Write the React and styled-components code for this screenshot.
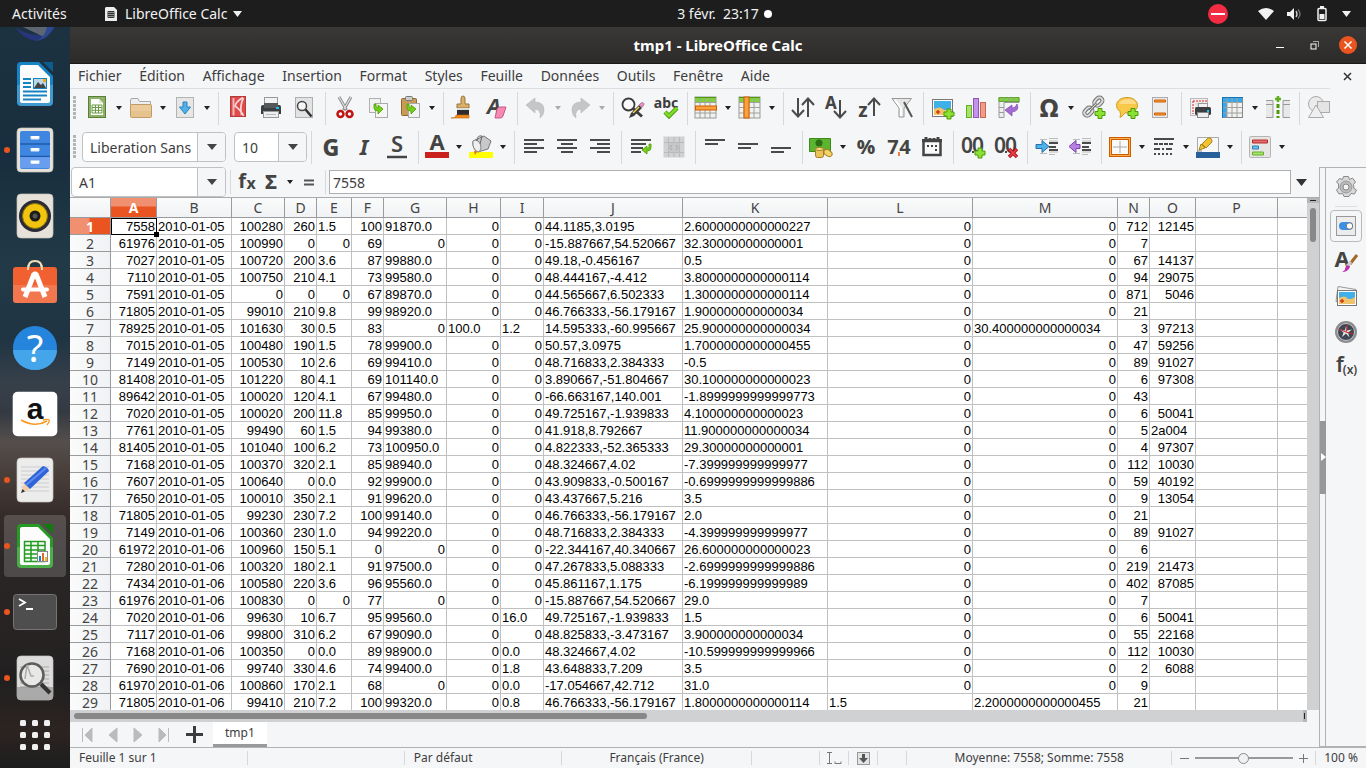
import React from "react";
import styled, { createGlobalStyle, css } from "styled-components";

const UI = `"Noto Sans", "Open Sans", sans-serif`;

const GlobalStyle = createGlobalStyle`
  * { box-sizing: border-box; }
  html, body { margin: 0; padding: 0; }
  body { font-family: ${UI}; font-size: 14px; color: #3d3d3d; background: #f5f6f7; overflow: hidden; }
  button, input, select { font: inherit; color: inherit; margin: 0; padding: 0; border: 0; background: none; }
  svg { display: block; overflow: visible; }
`;

/* ---------- drawings ---------- */

const Svg = ({ w = 24, h = 24, children }) => (
  <svg width={w} height={h} viewBox={`0 0 ${w} ${h}`} fill="none" aria-hidden="true">{children}</svg>
);
const T = ({ x = 12, y = 20, s = 20, w = 700, f = "#444", children, ...rest }) => (
  <text x={x} y={y} fontSize={s} fontWeight={w} fill={f} textAnchor="middle" fontFamily={UI} {...rest}>{children}</text>
);
const Plus = ({ x, y }) => (
  <path transform={`translate(${x} ${y})`} d="M-2 -5h4v3h3v4h-3v3h-4v-3h-3v-4h3z" fill="#8ae234" stroke="#4e9a06" />
);
const Lines = ({ rows, c = "#4a4a4a" }) => rows.map(([x1, x2, y]) => (
  <path key={y} d={`M${x1} ${y}H${x2}`} stroke={c} strokeWidth="2" />
));
const GreenArrow = ({ x, y }) => (
  <path transform={`translate(${x} ${y})`} d="M0 0v4q0 3 4 3v3l5-5-5-4v3q-2 0-2-2V0z" fill="#73d216" stroke="#4e9a06" strokeWidth=".8" />
);
const Grid = () => (
  <path d="M6 1v21M11 1v21M16 1v21M1 6.500h21M1 11.500h21M1 17h21" stroke="#a0a29e" />
);

const icons = {
  newDoc: <Svg><rect x="3.500" y=".5" width="17" height="21" fill="#8fb069" stroke="#587f38" /><path d="M6 3h8l4 4v12H6z" fill="#fff" /><path d="M14 3v4h4" fill="#dfead2" /><path d="M7 9h10v8H7zM7 11.500h10M7 14.300h10M10.500 9v8M13.500 9v8" stroke="#6b9a45" /></Svg>,
  open: <Svg><path d="M1.500 4q0-1.500 1.500-1.500h6l1.500 3h11v8h-20z" fill="#eee" stroke="#aaa" /><rect x="1.500" y="8.500" width="21" height="13" rx="1" fill="#eccb9a" stroke="#c19a66" /><path d="M2 15h20v6H2z" fill="#e3bd86" opacity=".6" /></Svg>,
  save: <Svg><rect x="3.500" y="1.500" width="17" height="20" fill="#e6e6e6" stroke="#b4b4b4" /><path d="M10 6h4v5h3.500L12 18l-5.500-7H10z" fill="#4fb0ea" stroke="#2a83bd" /></Svg>,
  pdf: <Svg><rect x="4.500" y=".5" width="15" height="20" fill="#df4a4a" stroke="#b53a3a" /><path d="M7.500 2v17.500" stroke="#f4b9b9" strokeWidth="2" /><path d="M17 1.500q-7 4-8 8.500 6 4 8.500 10M17.500 2q-4 7-2 17" stroke="#f9d6d6" strokeWidth="1.700" /></Svg>,
  print: <Svg><rect x="5.500" y="1.500" width="13" height="9" fill="#f2f2f2" stroke="#999" /><path d="M2 11q0-2 2-2h16q2 0 2 2v7H2z" fill="#3c3f41" /><path d="M5 7h14v5H5z" fill="#55585a" /><rect x="17" y="11" width="3" height="2" fill="#19c3f0" /><rect x="4.500" y="15.500" width="15" height="6" fill="#eee" stroke="#999" /><path d="M7 18.500h10" stroke="#bbb" /></Svg>,
  preview: <Svg><rect x="3.500" y="1.500" width="17" height="20" fill="#e3e3e3" stroke="#b0b0b0" /><circle cx="10" cy="10" r="4.500" fill="#f6f6f6" stroke="#444" strokeWidth="1.500" /><path d="M13.500 13.500l6 7" stroke="#333" strokeWidth="2.500" /></Svg>,
  cut: <Svg><path d="M6 1l7.500 13M18 1l-7.500 13" stroke="#888" strokeWidth="3" /><path d="M6 1l7 12M18 1l-7 12" stroke="#ddd" strokeWidth="1.300" /><circle cx="7.500" cy="18" r="3" stroke="#c01414" strokeWidth="2.500" /><circle cx="16.500" cy="18" r="3" stroke="#c01414" strokeWidth="2.500" /></Svg>,
  copy: <Svg><rect x="3.500" y="2.500" width="11" height="14" fill="#f2f2f2" stroke="#b0b0b0" /><rect x="9.500" y="7.500" width="12" height="14" fill="#f6f6f6" stroke="#aaa" /><GreenArrow x="8" y="8" /></Svg>,
  paste: <Svg><rect x="3.500" y="2.500" width="15" height="17" rx="1" fill="#c79a58" stroke="#91672c" /><rect x="7.500" y=".5" width="7" height="4" rx="1" fill="#ccc" stroke="#777" /><rect x="10.500" y="7.500" width="11" height="14" fill="#f2f2f2" stroke="#aaa" /><GreenArrow x="9" y="8" /></Svg>,
  brush: <Svg><path d="M10 8V3q0-3 2-3t2 3v5h4v4H6V8z" fill="#d9b06a" stroke="#9c7534" /><path d="M6 12h12v2H6z" fill="#ddd" /><path d="M6 14h12v5H6z" fill="#2d2d2d" /><path d="M5 19h13v3H0q5 0 5-3z" fill="#f08a1c" stroke="#c86a08" strokeWidth=".6" /></Svg>,
  clear: <Svg><T x={10} y={18} s={22} fontStyle="italic">A</T><path d="M13 13q1-2 3-2h6l-3 9q-.6 2-3 2h-5z" fill="#f58bb4" stroke="#c9588a" /></Svg>,
  undo: <Svg><path d="M2 9l9-7v4q9 0 9 8 0 5-4 8 1-4-.500-6.500Q14 13 11 13v4z" fill="#c4c6c8" stroke="#b5b7b9" strokeWidth=".6" /></Svg>,
  redo: <Svg><path d="M22 9l-9-7v4q-9 0-9 8 0 5 4 8-1-4 .5-6.500Q10 13 13 13v4z" fill="#c4c6c8" stroke="#b5b7b9" strokeWidth=".6" /></Svg>,
  find: <Svg><circle cx="7.500" cy="8.500" r="6" stroke="#3c3c3c" strokeWidth="1.800" fill="#fafafa" /><path d="M12 12.500l9 8" stroke="#3c3c3c" strokeWidth="3" /><path d="M8 22l2-5 8-8 3 3-8 8z" fill="#3c3c3c" /><path d="M12 17l6-6" stroke="#f3d34a" strokeWidth="1.500" /><path d="M18 9l2-2q1.500-1 2.500 0t0 2.500L21 11.500z" fill="#e58fc4" stroke="#8a5a7c" strokeWidth=".6" /></Svg>,
  spell: <Svg><T x={12} y={12} s={14} f="#3c3c3c">abc</T><path d="M11 16l4 4 8-8" stroke="#4e9a06" strokeWidth="4.500" /><path d="M11 16l4 4 8-8" stroke="#7ddc2a" strokeWidth="2.600" /></Svg>,
  rows: <Svg><rect x="1" y="1" width="21" height="21" fill="#f1f1f0" /><path d="M1 1h21v5H1z" fill="#7fd23c" /><Grid /><rect x="1" y="1" width="21" height="21" stroke="#999" /><path d="M1 1.500h21" stroke="#4e9a06" /><rect x="1.500" y="10" width="21" height="4" fill="#f9a03f" stroke="#ce5c00" /></Svg>,
  cols: <Svg><rect x="1" y="1" width="21" height="21" fill="#f1f1f0" /><path d="M1 1h21v5H1z" fill="#7fd23c" /><Grid /><rect x="1" y="1" width="21" height="21" stroke="#999" /><path d="M1 1.500h21" stroke="#4e9a06" /><rect x="6" y="1" width="5" height="21" fill="#f9a03f" stroke="#ce5c00" /></Svg>,
  sort: <Svg><path d="M7 2v18M1 14l6 6.500 6-6.500M17 21V3M11 9l6-6.500L23 9" stroke="#4a4a4a" strokeWidth="2" /></Svg>,
  sortAz: <Svg><T x={7} y={13} s={17}>A</T><path d="M16 4v17M10 15l6 6.500 6-6.500" stroke="#4a4a4a" strokeWidth="2" /></Svg>,
  sortZa: <Svg><T x={6} y={21} s={19}>z</T><path d="M17 20V3M11 9l6-6.500L23 9" stroke="#4a4a4a" strokeWidth="2" /></Svg>,
  filter: <Svg><path d="M2 2.500h19.500L14 12v9h-5v-9z" fill="#e6e6e6" stroke="#999" /><path d="M5 4l6 8v8" stroke="#fff" strokeWidth="2" /><path d="M14 6l8 15" stroke="#555" strokeWidth="2" /></Svg>,
  image: <Svg><rect x="1.500" y="3.500" width="20" height="17" fill="#fff" stroke="#777" /><path d="M3 5h17v9H3z" fill="#3fb0e8" /><path d="M3 13q6-3 9 0t8-1v7H3z" fill="#f1c26c" /><path d="M7 14v4M5 16h4" stroke="#d33a12" strokeWidth="1.500" /><Plus x={18} y={18} /></Svg>,
  chart: <Svg><rect x="2.500" y="9.500" width="5" height="12" fill="#a5e36a" stroke="#67ae2a" /><rect x="9.500" y="2.500" width="5" height="19" fill="#c792ea" stroke="#8f55bd" /><rect x="16.500" y="6.500" width="5" height="15" fill="#f19c88" stroke="#c96852" /></Svg>,
  pivot: <Svg><path d="M2 1.500h20v5H7v15H2z" fill="#eee" stroke="#999" /><path d="M2 1.500h20v4H2z" fill="#7fd23c" stroke="#5fa32a" /><path d="M7 1v5M12 1v5M17 1v5M2 11.500h5M2 16.500h5" stroke="#999" /><path d="M20 8q3 7-5 8v4l-7-6 7-5v3q4 0 5-4z" fill="#a66bd3" stroke="#7d44ac" strokeWidth=".7" /></Svg>,
  omega: <Svg><T y={21} s={25} w={800}>Ω</T></Svg>,
  link: <Svg><g stroke="#777" strokeWidth="4"><rect x="-3" y="-5" width="6" height="9" rx="3" transform="translate(16 6) rotate(45)" /><rect x="-3" y="-5" width="6" height="9" rx="3" transform="translate(6 16) rotate(45)" /></g><g stroke="#ddd" strokeWidth="1.800"><rect x="-3" y="-5" width="6" height="9" rx="3" transform="translate(16 6) rotate(45)" /><rect x="-3" y="-5" width="6" height="9" rx="3" transform="translate(6 16) rotate(45)" /></g><path d="M8 14l6-6" stroke="#777" strokeWidth="3" /><path d="M8 14l6-6" stroke="#ddd" /><Plus x={18} y={17.500} /></Svg>,
  comment: <Svg><path d="M12 1.500c6 0 10.500 3.400 10.500 8S18 17 12 17l-2-.2Q8 20 5 21.500q1-3 0-6Q1.500 13 1.500 9.500c0-4.600 4.500-8 10.500-8z" fill="#fbc94a" stroke="#d19a1c" /><path d="M4 8q2-5 9-5t8 5z" fill="#fff" opacity=".35" /><Plus x={18} y={17.500} /></Svg>,
  header: <Svg><rect x="4.500" y="1.500" width="15" height="20" fill="#ececec" stroke="#aaa" /><path d="M6.500 4h11v2h-11zM6.500 17h11v2h-11z" fill="#f9a03f" stroke="#ce5c00" /></Svg>,
  printArea: <Svg><rect x="1.500" y="2.500" width="17" height="17" fill="#f0f0f0" stroke="#bbb" /><path d="M4 5h14M4 5v13" stroke="#e02020" strokeDasharray="2 1" /><path d="M6 8h11M6 12h11M9 6v12M13 6v12" stroke="#ccc" /><rect x="9.500" y="7.500" width="9" height="5" fill="#f2f2f2" stroke="#999" /><rect x="6" y="11" width="16" height="8" rx="1.500" fill="#3c3f41" /><rect x="18" y="14" width="2" height="2" fill="#19c3f0" /><rect x="8.500" y="16.500" width="11" height="5" fill="#eee" stroke="#888" /></Svg>,
  freeze: <Svg><rect x="1" y="1" width="21" height="21" fill="#f1f1f0" /><path d="M1 1h21v5H6v16H1z" fill="#35a7ea" /><Grid /><rect x="1.500" y="1.500" width="20" height="20" stroke="#888" /><path d="M1.500 22V1.500H22" stroke="#1673b8" /></Svg>,
  split: <Svg w={26}><path d="M1 4.500h7v17H1M25 4.500h-7v17h7M1 8.500h7M18 8.500h7" fill="#e8e8e8" stroke="#999" /><path d="M13 8v14" stroke="#4e9a06" strokeWidth="3" strokeDasharray="4 2" /><path d="M13 0v6M10 3h6" stroke="#5fae1d" strokeWidth="2.500" /></Svg>,
  shapes: <Svg><circle cx="9" cy="8" r="7.500" fill="#ebebeb" stroke="#aaa" /><rect x="10.500" y="5.500" width="12" height="11" fill="#e4e4e4" stroke="#aaa" /><path d="M9 9l7.500 12.500h-15z" fill="#efefef" stroke="#aaa" /></Svg>,
  bold: <Svg><T y={21} s={23} w={800}>G</T></Svg>,
  italic: <Svg><T y={20} s={22} w={700} fontStyle="italic">I</T></Svg>,
  under: <Svg><T y={17} s={22} w={600}>S</T><path d="M2 22h20" stroke="#444" strokeWidth="2.500" /></Svg>,
  fontColor: <Svg><T y={15} s={22}>A</T><path d="M0 20h24" stroke="#c9211e" strokeWidth="6" /></Svg>,
  highlight: <Svg><path d="M0 20h24" stroke="#ff0" strokeWidth="6" /><path d="M4 6l11-5 7 5-3 8-10 3q-6-3-5-11z" fill="#c8c8c8" stroke="#777" /><path d="M4 6q2-2 5 0t3 7q-1 4-3 4-6-3-5-11z" fill="#efefef" stroke="#888" /><path d="M5 16q2-1 3 1l-2 3z" fill="#f06a10" /><path d="M8 6q0-6 5-5l-2 8" stroke="#666" /></Svg>,
  alignL: <Svg><Lines rows={[[2, 22, 5], [2, 15, 9], [2, 22, 13], [2, 15, 17]]} /></Svg>,
  alignC: <Svg><Lines rows={[[2, 22, 5], [6, 18, 9], [2, 22, 13], [6, 18, 17]]} /></Svg>,
  alignR: <Svg><Lines rows={[[2, 22, 5], [9, 22, 9], [2, 22, 13], [9, 22, 17]]} /></Svg>,
  wrap: <Svg><Lines rows={[[2, 22, 5], [2, 17, 9], [2, 14, 13], [2, 12, 17]]} /><path d="M22 9v4q0 3-4 3v3l-5-4 5-4v3q2 0 2-2V9z" fill="#73d216" stroke="#4e9a06" strokeWidth=".8" /></Svg>,
  merge: <Svg><rect x="1.500" y="1.500" width="21" height="21" fill="#d0d1d2" /><path d="M2 7.500h20M2 17.500h20M6.500 2v20M12 2v5M17.500 2v20M12 18v4" stroke="#b8babb" /><path d="M7 8h10v9H7z" fill="#c6c7c8" /><path d="M10 10l-2 2.500 2 2.500M14 10l2 2.500-2 2.500" stroke="#a8a8a8" /></Svg>,
  top: <Svg><Lines rows={[[2, 22, 5], [2, 15, 9]]} /></Svg>,
  middle: <Svg><Lines rows={[[2, 22, 9], [2, 15, 13]]} /></Svg>,
  bottom: <Svg><Lines rows={[[2, 22, 13], [2, 15, 17]]} /></Svg>,
  money: <Svg><path d="M.5 3.500h21v13H.500z" fill="#5cb531" stroke="#3d8a1a" /><circle cx="10" cy="8" r="3.500" fill="#2d6e12" /><rect x="6.500" y="13.500" width="8" height="9" rx="2" fill="#e9c35a" stroke="#a67c1c" /><ellipse cx="10.500" cy="14" rx="4" ry="1.500" fill="#f7e08e" stroke="#a67c1c" /><ellipse cx="19" cy="18" rx="4.500" ry="3" transform="rotate(35 19 18)" fill="#f2d36b" stroke="#a67c1c" /></Svg>,
  percent: <Svg><T y={19} s={20} w={800}>%</T></Svg>,
  number: <Svg><T x={6} y={19} s={20}>7</T><T x={18} y={19} s={20}>4</T><path d="M12 17v4" stroke="#f0803c" strokeWidth="2" /></Svg>,
  date: <Svg><rect x="3.500" y="6" width="17" height="14" fill="#fafafa" stroke="#444" strokeWidth="2.500" /><path d="M2 5.500h20M6 2v4M10 3v3M14 3v3M18 2v4" stroke="#444" strokeWidth="3" /><path d="M7 11h11M15 15h3" stroke="#444" strokeWidth="2" strokeDasharray="2 2" /></Svg>,
  addDec: <Svg><T x={6} y={18} s={21} w={600}>0</T><T x={17} y={18} s={21} w={600}>0</T><path d="M11 17h2" stroke="#444" strokeWidth="2" /><Plus x={19} y={18} /></Svg>,
  delDec: <Svg><T x={6} y={18} s={21} w={600}>0</T><T x={17} y={18} s={21} w={600}>0</T><path d="M11 17h2" stroke="#444" strokeWidth="2" /><path d="M15 14l8 8M23 14l-8 8" stroke="#b3141c" strokeWidth="3.500" /><path d="M15.500 14.500l7 7M22.500 14.500l-7 7" stroke="#e8454c" strokeWidth="1.500" /></Svg>,
  indent: <Svg><path d="M5 4.500h7M5 18.500h7M14 3.500h9M14 19.500h6M14 6h9M14 17h9" stroke="#bbb" /><Lines rows={[[14, 23, 8], [14, 21, 12], [14, 23, 15]]} /><path d="M1 9.500h6v-4l7 6-7 6v-4H1z" fill="#4fb0ea" stroke="#2272ab" /></Svg>,
  outdent: <Svg><path d="M5 4.500h7M5 18.500h7M14 3.500h9M14 19.500h6M14 6h9M14 17h9" stroke="#bbb" /><Lines rows={[[14, 23, 8], [14, 21, 12], [14, 23, 15]]} /><path d="M12 9.500H8v-4l-7 6 7 6v-4h4z" fill="#b681e0" stroke="#7d44ac" /></Svg>,
  borders: <Svg><rect x="2.500" y="3.500" width="19" height="17" fill="#fafafa" stroke="#ce5c00" strokeWidth="3" /><rect x="2.500" y="3.500" width="19" height="17" stroke="#fcae4e" /><path d="M12 6v12M5 12h14" stroke="#aaa" /></Svg>,
  lineStyle: <Svg><path d="M2 4h20" stroke="#4a4a4a" strokeWidth="2" /><path d="M2 9h20" stroke="#4a4a4a" strokeWidth="2" strokeDasharray="4 1" /><path d="M2 14h20" stroke="#4a4a4a" strokeWidth="2" strokeDasharray="6 2 2 2" /><path d="M2 19h20" stroke="#4a4a4a" strokeWidth="2" strokeDasharray="2 2" /></Svg>,
  borderColor: <Svg><path d="M1.500 18V2.500h21V18" fill="#f8f8f8" stroke="#aaa" /><path d="M0 20h24" stroke="#2a6099" strokeWidth="6" /><path d="M3 15l2-6 4 4zM6 9l6-6q4-1 4 4l-6 6z" fill="#f1c232" stroke="#a8861a" /><path d="M1 16h5" stroke="#888" /></Svg>,
  cond: <Svg><rect x="1.500" y="1.500" width="21" height="21" rx="1" fill="#e6e5e3" stroke="#b5b5b5" /><path d="M4.500 5h15v3h-15z" fill="#e56a6a" stroke="#b52b2b" /><path d="M4.500 11h6v3h-6z" fill="#6fc1f0" stroke="#2a7fb5" /><path d="M4.500 17h11v3h-11z" fill="#a5e36a" stroke="#67ae2a" /></Svg>,
  fx: <Svg><T x={7} y={18} s={20}>f</T><T x={16} y={19} s={16}>x</T></Svg>,
  sigma: <Svg><T y={19} s={20} w={800}>Σ</T></Svg>,
  equals: <Svg><path d="M7 10.500h10M7 14.500h10" stroke="#555" strokeWidth="2" /></Svg>,
  gear: <Svg><path d="M9.500 1.500h5l1 3 3-1.500 3 4-2 2.500.5 4 2.500 1.500-2 4-3.500-.5-2 3h-5l-1.500-3-3.500.5-2.500-4 2-2v-4l-2-2 3-3.500 3 1z" fill="#d9d9d9" stroke="#8a8a8a" /><circle cx="12" cy="12" r="6" fill="#bbb" stroke="#999" /><circle cx="12" cy="12" r="3" fill="#f2f2f2" stroke="#888" /></Svg>,
  props: <Svg><rect x="2.500" y="2.500" width="19" height="19" fill="#ececec" stroke="#999" /><rect x="5" y="8" width="14" height="8" rx="4" fill="#3d8fe6" /><circle cx="15.500" cy="12" r="3.200" fill="#fff" stroke="#777" /></Svg>,
  styles: <Svg w={26}><T x={9} y={17} s={22}>A</T><path d="M24 5l-7 9" stroke="#a5682a" strokeWidth="3" /><path d="M18 12l-4 4" stroke="#ccc" strokeWidth="3" /><path d="M15 15l2 2q-2 5-8 5 4-2 3-4z" fill="#c22ab0" /></Svg>,
  gallery: <Svg><path d="M4 1.500l18 3-2 14-18-2z" fill="#f4f4f4" stroke="#999" /><rect x="3.500" y="5.500" width="19" height="15" fill="#fff" stroke="#777" /><path d="M5 7h16v7H5z" fill="#3fb0e8" /><path d="M5 13q6-3 8 0t8-1v7H5z" fill="#f1c26c" /><path d="M8 14v4M6 16h4" stroke="#d33a12" strokeWidth="1.500" /></Svg>,
  compass: <Svg><circle cx="12" cy="12" r="10" fill="#3e4654" stroke="#8d8d8d" strokeWidth="2" /><circle cx="12" cy="12" r="8.500" stroke="#ccc" /><path d="M12 6l1 4.500 5-1-4 3 1.500 5-3.500-4-4 3.500 1.500-4.500L6 9.500l5 1z" fill="#e8e8e8" /><path d="M5 9l7 3 2-7.500M12 12l7 2" stroke="#d22828" strokeWidth="1" /></Svg>,
  func: <Svg><T x={6} y={17} s={21} w={600}>f</T><T x={16} y={19} s={12} w={600}>(x)</T></Svg>,
};

const Tri = ({ s = 6, c = "#222" }) => (
  <svg width={s} height={Math.ceil(s / 2) + 1} viewBox="0 0 6 4" preserveAspectRatio="none" aria-hidden="true"><path d="M0 0h6L3 4z" fill={c} /></svg>
);

/* ---------- desktop ---------- */

const Desktop = styled.div`
  display: flex; flex-direction: column; height: 100vh; overflow: hidden;
`;
const TopBar = styled.header`
  display: grid; grid-template-columns: 70px 1fr auto 1fr; align-items: center;
  height: 27px; background: #1d1d1d; color: #f2f2f2; white-space: nowrap;
`;
const TopButton = styled.button`
  display: flex; align-items: center; gap: 8px; padding-left: ${(p) => p.$pad || 0}px; line-height: 20px;
`;
const AppName = styled.span`display: flex; align-items: center; gap: 6px;`;
const Clock = styled.button`display: flex; align-items: center; gap: 5px; padding-left: 13px; white-space: pre;`;
const Dot = styled.span`width: 8px; height: 8px; border-radius: 50%; background: #fff;`;
const Tray = styled.div`display: flex; justify-content: flex-end; align-items: center; gap: 12px; padding-right: 15px;`;
const Busy = styled.span`
  display: flex; align-items: center; justify-content: center; width: 20px; height: 20px; margin-right: 18px;
  border-radius: 50%; background: #f22c42;
  &::after { content: ""; width: 14px; height: 2px; background: #fff; }
`;

const Work = styled.div`display: flex; flex: 1; min-height: 0;`;
const Dock = styled.nav`
  flex: none; width: 70px; overflow: hidden;
  background: linear-gradient(#1c3241 0, #182e3e 18%, #223a48 32%, #1f3442 42%, #37404a 48%, #343a42 52%, #554e4c 56%, #463c38 61%, #352c2a 66%, #2a2626 72%, #272322 82%, #201f20 88%, #2c2421 95%, #1d1d1e 100%);
`;
const DockItem = styled.button`
  position: relative; display: flex; align-items: ${(p) => (p.$partial ? "flex-start" : "center")}; justify-content: center;
  width: 70px; height: ${(p) => p.$h || 66}px;
  ${(p) => p.$active && css`
    &::before { content: ""; position: absolute; inset: 2px 4px; border-radius: 4px; background: rgba(255,255,255,.17); }
  `}
  ${(p) => p.$running && css`
    &::after { content: ""; position: absolute; left: 4px; top: 30px; width: 6px; height: 6px; border-radius: 50%; background: #e95420; }
  `}
  svg { position: relative; }
`;

const Doc = ({ c, d, children }) => (
  <Svg w={46} h={46}>
    <path d="M9 1h18l14 14v26q0 4-4 4H9q-4 0-4-4V5q0-4 4-4z" fill={c} />
    <path d="M5 24h36v17q0 4-4 4H9q-4 0-4-4z" fill="#fff" opacity=".18" />
    <path d="M31 1h10v10z" fill={d} />
    <path d="M9 4h17l12 12v24q0 2-2 2H10q-2 0-2-2V6q0-2 2-2z" fill="#fcfcfc" />
    {children}
  </Svg>
);
const Plate = ({ f = "#e6e2da", children }) => (
  <Svg w={46} h={46}><rect x="5" y="1" width="36" height="44" rx="4" fill={f} stroke="#c9c5bd" strokeWidth=".7" />{children}</Svg>
);

const dockIcons = {
  mail: <Svg w={46} h={16}><path d="M3 0q8 12 21 14 13-2 19-14h-6q-4 7-12 8Q13 7 3 0z" fill="#27367a" /><path d="M11 0h25l-4 10z" fill="#5d6670" /><path d="M24 14q9-4 11-14h7q-6 12-18 14z" fill="#2d4a91" /></Svg>,
  writer: <Doc c="#1683c4" d="#0c5c92"><path d="M11 18h8M11 22h8M11 26h8M11 30.500h24M11 34.500h24M11 38.500h18" stroke="#1683c4" strokeWidth="2" /><rect x="21.500" y="17.500" width="13" height="10" fill="#bcd8e8" stroke="#1683c4" /><path d="M22 27l4-6 3 3 2-2 3 5z" fill="#444" /><rect x="31" y="18" width="3" height="3" fill="#f2a91c" /></Doc>,
  files: <Plate><rect x="8" y="4" width="30" height="38" rx="2" fill="#3f86e0" /><path d="M8 17h30M8 29.500h30" stroke="#1d5cad" strokeWidth="1.500" /><path d="M8 30h30v11H8z" fill="#7aa6f5" opacity=".7" /><path d="M19 9v3h8V9M19 21v3h8v-3M19 33.500v3h8v-3" fill="#fff" stroke="#dfe9f7" /></Plate>,
  music: <Plate><circle cx="23" cy="23" r="16" fill="#2b2a35" /><circle cx="23" cy="23" r="12.500" fill="#f2c40f" stroke="#8a7408" /><circle cx="23" cy="23" r="5.500" fill="#1c1c1c" /><circle cx="23" cy="23" r="2.500" fill="#555" /></Plate>,
  software: <Svg w={46} h={46}><path d="M16 10q0-8 7-8t7 8" stroke="#f3dfb4" strokeWidth="2" /><rect x="1" y="8" width="44" height="36" rx="3" fill="#f06030" /><path d="M1 26h44v15q0 3-3 3H4q-3 0-3-3z" fill="#fff" opacity=".15" /><path d="M13 38l9-23h2l9 23" stroke="#fff" strokeWidth="5" strokeLinejoin="bevel" /><path d="M11 30.500h24" stroke="#fff" strokeWidth="4" strokeLinecap="round" /><path d="M16 11q0-3 1-5M30 11q0-3-1-5" stroke="#f3dfb4" strokeWidth="2" /></Svg>,
  help: <Svg w={46} h={46}><circle cx="23" cy="23" r="22" fill="#2585dc" /><path d="M1 25a22 20 0 0 0 44 0z" fill="#45a5ea" /><T x={23} y={37} s={38} w={400} f="#fff">?</T></Svg>,
  amazon: <Svg w={46} h={46}><rect x=".7" y=".7" width="44.600" height="44.600" rx="5" fill="#fff" /><T x={23} y={28} s={30} f="#111" fontFamily="Liberation Sans">a</T><path d="M9 29q14 8 26 1" stroke="#f7981d" strokeWidth="1.500" /><path d="M31 29q5-1 6 0t-2 5" stroke="#f7981d" strokeWidth="1.300" /></Svg>,
  gedit: <Plate f="#ececec"><path d="M9 10h28M9 14h28M9 18h28M9 22h28M9 26h28M9 30h28M9 34h28" stroke="#ccc" /><path d="M9 36l3-10 6 6z" fill="#f0cfa6" /><path d="M9 36l1.500-4 2.500 2.500z" fill="#333" /><path d="M12 26l19-17q5 1 6 5L18 32z" fill="#2f63d8" /><path d="M14 28l20-17" stroke="#5e8bf0" strokeWidth="2" /></Plate>,
  calc: <Doc c="#259b24" d="#12780f"><path d="M12 18h21v20H12z" fill="#f3fbf1" /><path d="M12 18.500h21M12 22.500h21M12 27h21M12 31h21M12 35h21M12 38.500h21M12.500 18v21M19 18v21M26 18v21M33 18v21" stroke="#259b24" strokeWidth="1.500" /><rect x="25.500" y="28.500" width="10" height="10" fill="#fff" stroke="#888" /><path d="M27 33h2v5h-2z" fill="#1683c4" /><path d="M30 30h2v8h-2z" fill="#e56a20" /><path d="M33 34h2v4h-2z" fill="#f2b61c" /></Doc>,
  terminal: <Svg w={46} h={38}><rect x="1.500" y="1.500" width="43" height="35" rx="3" fill="#4e4e4e" stroke="#747474" /><path d="M7 6l6 3.500L7 13M14 16h7" stroke="#fff" strokeWidth="1.800" /></Svg>,
  viewer: <Plate f="#dcdcdc"><path d="M8 12h29M8 16h29M8 20h29M8 24h29M8 28h29M8 32h29" stroke="#aaa" /><path d="M5 32h36v9q0 4-4 4H9q-4 0-4-4z" fill="#888" opacity=".6" /><path d="M29 29l9 9" stroke="#333" strokeWidth="4" /><circle cx="20" cy="20" r="11.500" fill="#e8e8e6" stroke="#5c5c5c" strokeWidth="2.500" /><path d="M13 24l2-14 4 11h3" stroke="#aaa" strokeWidth="1.500" /></Plate>,
  apps: <Svg w={32} h={32}>{[1, 13, 25].map((y) => [1, 13, 25].map((x) => <rect key={`${x}-${y}`} x={x} y={y} width="6" height="6" rx="1.500" fill="#f0f0f0" />))}</Svg>,
};

const dock = [
  ["mail", "Thunderbird", { $h: 24, $partial: true }],
  ["writer", "LibreOffice Writer", {}],
  ["files", "Fichiers", { $running: true }],
  ["music", "Rhythmbox", {}],
  ["software", "Logiciels", {}],
  ["help", "Aide", {}],
  ["amazon", "Amazon", {}],
  ["gedit", "Éditeur de texte", { $running: true }],
  ["calc", "LibreOffice Calc", { $running: true, $active: true }],
  ["terminal", "Terminal", { $running: true }],
  ["viewer", "Visionneur de documents", { $running: true }],
  ["apps", "Applications", { $h: 48 }],
];

/* ---------- window ---------- */

const Window = styled.main`display: flex; flex-direction: column; flex: 1; min-width: 0; background: #f5f6f7;`;
const TitleBar = styled.div`
  display: grid; grid-template-columns: 1fr auto 1fr; align-items: center; height: 37px;
  background: linear-gradient(#393836, #2c2b29); border-bottom: 1px solid #1b1a19; color: #fff;
`;
const Title = styled.h1`grid-column: 2; margin: 0; font-size: 15px; font-weight: 700; line-height: 20px;`;
const WindowButtons = styled.div`display: flex; align-items: center; justify-content: flex-end; gap: 16px; padding-right: 9px;`;
const WindowButton = styled.button`
  display: flex; align-items: center; justify-content: center; width: 18px; height: 18px; border-radius: 50%;
  background: ${(p) => (p.$close ? "#e95420" : "none")};
`;
const MenuBar = styled.nav`display: flex; align-items: center; justify-content: space-between; height: 24px;`;
const MenuList = styled.div`display: flex; flex: 0 1 708px; justify-content: space-between; white-space: nowrap;`;
const MenuItem = styled.button`height: 24px; padding: 0 8px; line-height: 24px;`;
const CloseDoc = styled.button`padding: 4px 14px;`;
const ToolArea = styled.div`display: flex; flex-direction: column;`;
const TopRule = styled.div`height: 1px; margin-right: 36px; background: #dcdee0;`;
const Toolbar = styled.div`display: flex; align-items: center; height: 39px; padding: 0 0 1px 3px;`;
const Handle = styled.span`
  width: 3px; height: 24px; margin-right: 6px;
  background: repeating-linear-gradient(#b4b4b4 0 3px, transparent 3px 4px);
`;
const Sep = styled.span`flex: none; width: 1px; height: ${(p) => p.$h || 33}px; margin: 0 3px 0 4px; background: #d6d8da;`;
const ToolButton = styled.button`
  flex: none; display: flex; align-items: center; justify-content: center; width: ${(p) => p.$w || 32}px; height: 32px;
  margin-right: ${(p) => (p.$w ? 0 : 1)}px;
`;
const Arrow = styled(ToolButton)`width: 14px; margin-right: 0; opacity: ${(p) => (p.$dim ? 0.35 : 1)};`;
const Combo = styled.label`
  display: flex; width: ${(p) => p.$w}px; height: 30px; margin-right: ${(p) => p.$gap || 0}px;
  border: 1px solid #bfc1c3; border-radius: 4px; background: #fff; overflow: hidden;
`;
const ComboSelect = styled.select`
  flex: 1; min-width: 0; margin: 0 5px 0 7px; appearance: none; outline: none; text-overflow: clip;
`;
const ComboInput = styled.input`flex: 1; min-width: 0; padding-left: 7px; outline: none;`;
const ComboArrow = styled.span`
  display: flex; align-items: center; justify-content: center; width: 28px; border-left: 1px solid #bfc1c3; background: #f5f6f7;
`;
const Content = styled.div`display: flex; flex: 1; min-height: 0;`;
const Sheet = styled.section`display: flex; flex-direction: column; flex: 1; min-width: 0;`;
const FormulaBar = styled.div`
  display: flex; flex: none; align-items: center; height: 31px; padding: 0 8px 0 1px; border-bottom: 1px solid #a9abad;
`;
const FormulaInput = styled.input`
  flex: 1; min-width: 0; height: 24px; padding: 0 3px; border: 1px solid #adafb1; background: #fff; outline: none;
`;
const GridRow = styled.div`display: flex; flex: 1; min-height: 0;`;
const GridView = styled.div`flex: 1; min-width: 0; overflow: hidden; background: #fff;`;
const Table = styled.table`
  width: 100%; table-layout: fixed; border-collapse: separate; border-spacing: 0;
  th, td { padding: 0; white-space: nowrap; }
`;
const ColHead = styled.th`
  height: 20px; font-weight: ${(p) => (p.$on ? 700 : 400)}; line-height: 19px; color: ${(p) => (p.$on ? "#fff" : "#444")};
  border-right: 1px solid #999b9d; border-bottom: 1px solid #999b9d;
  background: ${(p) => (p.$on ? "linear-gradient(#f19071 0 8px, #e95420 9px)" : "linear-gradient(#fafbfa, #f1f2f5)")};
  &:last-child { border-right: 0; }
`;
const RowHead = styled.th`
  height: 17px; font-weight: ${(p) => (p.$on ? 700 : 400)}; line-height: 14px; color: ${(p) => (p.$on ? "#fff" : "#444")};
  border-right: 1px solid #999b9d; border-bottom: 1px solid #999b9d;
  background: ${(p) => (p.$on ? "linear-gradient(90deg, #f19071 0 19px, #e95420 20px)" : "linear-gradient(90deg, #fafbfa, #f1f2f5)")};
  && { padding: 2px 0 0; }
`;
const Cell = styled.td`
  position: relative; height: 17px; color: #000; font: 13px/14px "Liberation Sans", Arial, sans-serif;
  text-align: ${(p) => (p.$num ? "right" : "left")};
  border-right: 1px solid #c0c0c0; border-bottom: 1px solid #c0c0c0;
  && { padding: 2px 1px 0; }
  &:last-child { border-right: 0; }
  ${(p) => p.$on && css`
    &::before { content: ""; position: absolute; inset: 0 -1px -1px 0; border: 1px solid #000; }
    &::after { content: ""; position: absolute; right: -3px; bottom: -3px; width: 5px; height: 5px; background: #000; z-index: 1; }
  `}
`;
const VScroll = styled.div`
  flex: none; width: 12px; background: #cfd1d3;
  &::before { content: ""; display: block; height: 5px; background: linear-gradient(90deg, transparent 3px, #222 3px 9px, transparent 9px) 0 2px / 100% 1px no-repeat, #b4b6b8; }
  &::after { content: ""; display: block; width: 6px; height: 34px; margin: 5px 0 0 3px; border-radius: 3px; background: #888; }
`;
const HScroll = styled.div`
  flex: none; display: flex; align-items: center; height: 12px; margin-right: 12px; padding-left: 4px; background: #cfd1d3;
  &::before { content: ""; width: 46.5%; height: 6px; border-radius: 3px; background: #888; }
  &::after { content: ""; width: 4px; height: 12px; margin-left: auto; background: linear-gradient(#222, #222) 1px 3px / 1px 6px no-repeat, #b4b6b8; }
`;
const Tabs = styled.div`display: flex; flex: none; align-items: center; height: 25px; padding-left: 5px;`;
const TabNav = styled.button`display: flex; align-items: center; justify-content: center; width: 25px; height: 24px;`;
const AddTab = styled(TabNav)`width: 38px;`;
const Tab = styled.button`
  height: 25px; padding: 0 12px; background: #fff; border-bottom: 3px solid #999; font-size: 12px; line-height: 22px;
`;
const Splitter = styled.div`
  display: flex; align-items: center; flex: none; width: 7px; border: 1px solid #b0b2b4;
`;
const Grip = styled.button`display: flex; align-items: center; width: 6px; height: 73px; background: #979999;`;
const SideBar = styled.aside`
  display: flex; flex: none; flex-direction: column; align-items: center; width: 40px; padding-top: 3px;
  border-top: 1px solid #b0b2b4; border-bottom: 1px solid #b0b2b4;
`;
const SideRule = styled.span`width: 22px; height: 1px; margin: 3px 0; background: #dcdee0;`;
const SideButton = styled.button`
  display: flex; align-items: center; justify-content: center; width: 32px; height: ${(p) => p.$h || 35}px;
  margin-bottom: ${(p) => (p.$on ? 2 : 0)}px;
  border: 1px solid ${(p) => (p.$on ? "#b8babc" : "transparent")}; border-radius: 4px;
`;
const StatusBar = styled.footer`
  display: flex; flex: none; align-items: center; height: 21px; border-top: 1px solid #b0b2b4; font-size: 12px; line-height: 20px; white-space: nowrap;
`;
const StatusCell = styled.span`
  display: flex; align-items: center; justify-content: ${(p) => (p.$start ? "flex-start" : "center")};
  flex: ${(p) => p.$grow || 0} ${(p) => p.$w}px; height: 14px; min-width: 0; padding-left: ${(p) => (p.$start ? 9 : 0)}px;
  border-right: ${(p) => (p.$last ? 0 : 1)}px solid #d6d8da;
`;
const Zoom = styled.input`
  width: 98px; height: 14px; margin: 0 6px; appearance: none; background: linear-gradient(#999, #999) 0 6px / 100% 2px no-repeat;
  &::-webkit-slider-thumb { appearance: none; width: 11px; height: 11px; border: 1px solid #8a8c8e; border-radius: 50%; background: #f0f1f2; }
`;

const menus = ["Fichier", "Édition", "Affichage", "Insertion", "Format", "Styles", "Feuille", "Données", "Outils", "Fenêtre", "Aide"];

/* "|" is a separator, a trailing "+" adds a drop-down arrow, a trailing "-" a disabled one */
const row1 = "newDoc+ open+ save+ | pdf print preview | cut copy paste+ | brush clear | undo- redo- | find spell | rows+ cols+ | sort sortAz sortZa filter | image chart pivot | omega+ link comment header | printArea freeze+ split | shapes";
const row2 = "| bold italic under | fontColor+ highlight+ | alignL alignC alignR | wrap merge | top middle bottom | money+ percent number date | addDec delDec | indent outdent | borders+ lineStyle+ borderColor+ | cond+";

const Tools = ({ spec }) => spec.split(" ").map((item, i) => {
  if (item === "|") return <Sep key={i} />;
  const name = item.replace(/[+-]$/, "");
  if (name === item) return <ToolButton key={i} aria-label={name}>{icons[name]}</ToolButton>;
  return (
    <React.Fragment key={i}>
      <ToolButton $w={30} aria-label={name}>{icons[name]}</ToolButton>
      <Arrow $dim={item.endsWith("-")} aria-label={`${name} options`}><Tri /></Arrow>
    </React.Fragment>
  );
});

const columns = [["A", 46], ["B", 75], ["C", 53], ["D", 32], ["E", 35], ["F", 32], ["G", 63], ["H", 54], ["I", 43], ["J", 139], ["K", 145], ["L", 145], ["M", 145], ["N", 32], ["O", 46], ["P", 82]];

const data = `7558 2010-01-05 100280 260 1.5 100 91870.0 0 0 44.1185,3.0195 2.6000000000000227 0 0 712 12145
61976 2010-01-05 100990 0 0 69 0 0 0 -15.887667,54.520667 32.30000000000001 0 0 7 _
7027 2010-01-05 100720 200 3.6 87 99880.0 0 0 49.18,-0.456167 0.5 0 0 67 14137
7110 2010-01-05 100750 210 4.1 73 99580.0 0 0 48.444167,-4.412 3.8000000000000114 0 0 94 29075
7591 2010-01-05 0 0 0 67 89870.0 0 0 44.565667,6.502333 1.3000000000000114 0 0 871 5046
71805 2010-01-05 99010 210 9.8 99 98920.0 0 0 46.766333,-56.179167 1.900000000000034 0 0 21 _
78925 2010-01-05 101630 30 0.5 83 0 100.0 1.2 14.595333,-60.995667 25.900000000000034 0 30.400000000000034 3 97213
7015 2010-01-05 100480 190 1.5 78 99900.0 0 0 50.57,3.0975 1.7000000000000455 0 0 47 59256
7149 2010-01-05 100530 10 2.6 69 99410.0 0 0 48.716833,2.384333 -0.5 0 0 89 91027
81408 2010-01-05 101220 80 4.1 69 101140.0 0 0 3.890667,-51.804667 30.100000000000023 0 0 6 97308
89642 2010-01-05 100020 120 4.1 67 99480.0 0 0 -66.663167,140.001 -1.8999999999999773 0 0 43 _
7020 2010-01-05 100020 200 11.8 85 99950.0 0 0 49.725167,-1.939833 4.100000000000023 0 0 6 50041
7761 2010-01-05 99490 60 1.5 94 99380.0 0 0 41.918,8.792667 11.900000000000034 0 0 5 2a004
81405 2010-01-05 101040 100 6.2 73 100950.0 0 0 4.822333,-52.365333 29.30000000000001 0 0 4 97307
7168 2010-01-05 100370 320 2.1 85 98940.0 0 0 48.324667,4.02 -7.399999999999977 0 0 112 10030
7607 2010-01-05 100640 0 0.0 92 99900.0 0 0 43.909833,-0.500167 -0.6999999999999886 0 0 59 40192
7650 2010-01-05 100010 350 2.1 91 99620.0 0 0 43.437667,5.216 3.5 0 0 9 13054
71805 2010-01-05 99230 230 7.2 100 99140.0 0 0 46.766333,-56.179167 2.0 0 0 21 _
7149 2010-01-06 100360 230 1.0 94 99220.0 0 0 48.716833,2.384333 -4.399999999999977 0 0 89 91027
61972 2010-01-06 100960 150 5.1 0 0 0 0 -22.344167,40.340667 26.600000000000023 0 0 6 _
7280 2010-01-06 100320 180 2.1 91 97500.0 0 0 47.267833,5.088333 -2.6999999999999886 0 0 219 21473
7434 2010-01-06 100580 220 3.6 96 95560.0 0 0 45.861167,1.175 -6.199999999999989 0 0 402 87085
61976 2010-01-06 100830 0 0 77 0 0 0 -15.887667,54.520667 29.0 0 0 7 _
7020 2010-01-06 99630 10 6.7 95 99560.0 0 16.0 49.725167,-1.939833 1.5 0 0 6 50041
7117 2010-01-06 99800 310 6.2 67 99090.0 0 0 48.825833,-3.473167 3.900000000000034 0 0 55 22168
7168 2010-01-06 100350 0 0.0 89 98900.0 0 0.0 48.324667,4.02 -10.599999999999966 0 0 112 10030
7690 2010-01-06 99740 330 4.6 74 99400.0 0 1.8 43.648833,7.209 3.5 0 0 2 6088
61970 2010-01-06 100860 170 2.1 68 0 0 0.0 -17.054667,42.712 31.0 0 0 9 _
71805 2010-01-06 99410 210 7.2 100 99320.0 0 0.8 46.766333,-56.179167 1.8000000000000114 1.5 2.2000000000000455 21 _`
  .split("\n").map((line) => [...line.split(" ").map((v) => (v === "_" ? "" : v)), "", ""]);

const SheetTable = () => (
  <Table>
    <colgroup>
      <col width="41" />
      {columns.map(([name, w]) => <col key={name} width={w} />)}
      <col />
    </colgroup>
    <thead>
      <tr>
        <ColHead aria-label="Tout sélectionner" />
        {columns.map(([name]) => <ColHead key={name} scope="col" $on={name === "A"}>{name}</ColHead>)}
        <ColHead />
      </tr>
    </thead>
    <tbody>
      {data.map((cells, r) => (
        <tr key={r}>
          <RowHead scope="row" $on={r === 0}>{r + 1}</RowHead>
          {cells.map((v, c) => <Cell key={c} $num={/^\d+$/.test(v)} $on={r === 0 && c === 0}>{v}</Cell>)}
        </tr>
      ))}
    </tbody>
  </Table>
);

const navPaths = ["M1.500 1v14M11 1L4 8l7 7z", "M11 1L3 8l8 7z", "M3 1l8 7-8 7z", "M12.500 1v14M3 1l7 7-7 7z"];

export default function App() {
  return (
    <Desktop>
      <GlobalStyle />
      <TopBar>
        <TopButton $pad={12}>Activités</TopButton>
        <TopButton $pad={35}>
          <Svg w={12} h={14}><path d="M1 0h8l3 3v11H0V1z" fill="#ececec" /><path d="M3 4.500h6v6H3zM3 6.500h6M3 8.500h6M5 4.500v6M7 4.500v6" stroke="#333" /></Svg>
          <AppName>LibreOffice Calc <Tri s={9} c="#f2f2f2" /></AppName>
        </TopButton>
        <Clock>{"3 févr.  23:17"}<Dot /></Clock>
        <Tray>
          <Busy />
          <Svg w={16} h={14}><path d="M0 4q8-6 16 0L8 13z" fill="#f2f2f2" /></Svg>
          <Svg w={16} h={14}><path d="M1 5h3l4-4v12L4 9H1z" fill="#f2f2f2" /><path d="M10 4q2 3 0 6" stroke="#ddd" strokeWidth="1.300" /><path d="M12 2.500q4 4.500 0 9" stroke="#777" strokeWidth="1.300" /></Svg>
          <Svg w={16} h={16}><path d="M6 1h4" stroke="#f2f2f2" strokeWidth="2" /><rect x="4" y="2.500" width="8" height="12" rx="1" stroke="#f2f2f2" strokeWidth="1.500" /><path d="M5.500 8h5v5h-5z" fill="#f2f2f2" /></Svg>
          <Tri s={9} c="#f2f2f2" />
        </Tray>
      </TopBar>
      <Work>
        <Dock aria-label="Dock">
          {dock.map(([icon, label, props]) => <DockItem key={icon} aria-label={label} {...props}>{dockIcons[icon]}</DockItem>)}
        </Dock>
        <Window>
          <TitleBar>
            <Title>tmp1 - LibreOffice Calc</Title>
            <WindowButtons>
              <WindowButton aria-label="Réduire"><Svg w={8} h={8}><path d="M0 6.500h8" stroke="#fff" /></Svg></WindowButton>
              <WindowButton aria-label="Restaurer"><Svg w={9} h={9}><rect x="1" y="3" width="5" height="5" stroke="#fff" /><path d="M3 .5h5.500V6" stroke="#aaa" /></Svg></WindowButton>
              <WindowButton $close aria-label="Fermer"><Svg w={8} h={8}><path d="M.5.500l7 7M7.500.500l-7 7" stroke="#fff" strokeWidth="1.500" /></Svg></WindowButton>
            </WindowButtons>
          </TitleBar>
          <MenuBar>
            <MenuList>{menus.map((m) => <MenuItem key={m}>{m}</MenuItem>)}</MenuList>
            <CloseDoc aria-label="Fermer le document"><Svg w={9} h={9}><path d="M1 1l7 7M8 1L1 8" stroke="#333" strokeWidth="1.500" /></Svg></CloseDoc>
          </MenuBar>
          <ToolArea>
            <TopRule />
            <Toolbar role="toolbar"><Handle /><Tools spec={row1} /></Toolbar>
            <Toolbar role="toolbar">
              <Handle />
              <Combo $w={144} $gap={8}>
                <ComboSelect aria-label="Police"><option>Liberation Sans</option></ComboSelect>
                <ComboArrow><Tri s={10} c="#444" /></ComboArrow>
              </Combo>
              <Combo $w={73}>
                <ComboSelect aria-label="Taille"><option>10</option></ComboSelect>
                <ComboArrow><Tri s={10} c="#444" /></ComboArrow>
              </Combo>
              <Tools spec={row2} />
            </Toolbar>
          </ToolArea>
          <Content>
            <Sheet>
              <FormulaBar>
                <Combo $w={155}>
                  <ComboInput aria-label="Zone de nom" defaultValue="A1" />
                  <ComboArrow><Tri s={10} c="#444" /></ComboArrow>
                </Combo>
                <Sep $h={24} />
                <ToolButton $w={25} aria-label="Assistant Fonctions">{icons.fx}</ToolButton>
                <ToolButton $w={24} aria-label="Somme">{icons.sigma}</ToolButton>
                <Arrow aria-label="Autres fonctions"><Tri /></Arrow>
                <ToolButton $w={24} aria-label="Formule">{icons.equals}</ToolButton>
                <Sep $h={24} />
                <FormulaInput aria-label="Ligne de saisie" defaultValue="7558" />
                <ToolButton $w={20} aria-label="Étendre"><Tri s={11} c="#333" /></ToolButton>
              </FormulaBar>
              <GridRow>
                <GridView><SheetTable /></GridView>
                <VScroll />
              </GridRow>
              <HScroll />
              <Tabs>
                {navPaths.map((d) => <TabNav key={d} aria-label="Parcourir les feuilles"><Svg w={14} h={16}><path d={d} fill="#b9bbbd" stroke="#b9bbbd" /></Svg></TabNav>)}
                <AddTab aria-label="Ajouter une feuille"><Svg w={17} h={17}><path d="M8.500 0v17M0 8.500h17" stroke="#3c3c3c" strokeWidth="3" /></Svg></AddTab>
                <Tab>tmp1</Tab>
              </Tabs>
            </Sheet>
            <Splitter><Grip aria-label="Masquer"><Svg w={6} h={8}><path d="M1 0l5 4-5 4z" fill="#fff" /></Svg></Grip></Splitter>
            <SideBar>
              <SideButton $h={32} aria-label="Paramètres">{icons.gear}</SideButton>
              <SideRule />
              <SideButton $h={32} $on aria-label="Propriétés">{icons.props}</SideButton>
              <SideButton aria-label="Styles">{icons.styles}</SideButton>
              <SideButton aria-label="Galerie">{icons.gallery}</SideButton>
              <SideButton aria-label="Navigateur">{icons.compass}</SideButton>
              <SideButton aria-label="Fonctions">{icons.func}</SideButton>
            </SideBar>
          </Content>
          <StatusBar>
            <StatusCell $w={178} $grow={1} $start>Feuille 1 sur 1</StatusCell>
            <StatusCell $w={157} $grow={1} />
            <StatusCell $w={157} $grow={1} $start>Par défaut</StatusCell>
            <StatusCell $w={191} $grow={1}>Français (France)</StatusCell>
            <StatusCell $w={68} $grow={1} />
            <StatusCell $w={29}><Svg w={16} h={14}><path d="M1 1.500h5M3.500 1.500v11M1 12.500h5M9 10.500v2h6v-2" stroke="#777" /></Svg></StatusCell>
            <StatusCell $w={29}><Svg w={13} h={13}><rect x=".5" y=".5" width="12" height="12" fill="#e4e4e4" stroke="#999" /><path d="M5 2h3v4h3l-4.500 5L2 6h3z" fill="#555" /></Svg></StatusCell>
            <StatusCell $w={29} />
            <StatusCell $w={265} $grow={1}>Moyenne: 7558; Somme: 7558</StatusCell>
            <StatusCell $w={144}>
              <Svg w={9} h={9}><path d="M0 4.500h9" stroke="#777" /></Svg>
              <Zoom type="range" aria-label="Zoom" min="0" max="200" defaultValue="100" />
              <Svg w={9} h={9}><path d="M0 4.500h9M4.500 0v9" stroke="#777" /></Svg>
            </StatusCell>
            <StatusCell $w={50} $last>100 %</StatusCell>
          </StatusBar>
        </Window>
      </Work>
    </Desktop>
  );
}
